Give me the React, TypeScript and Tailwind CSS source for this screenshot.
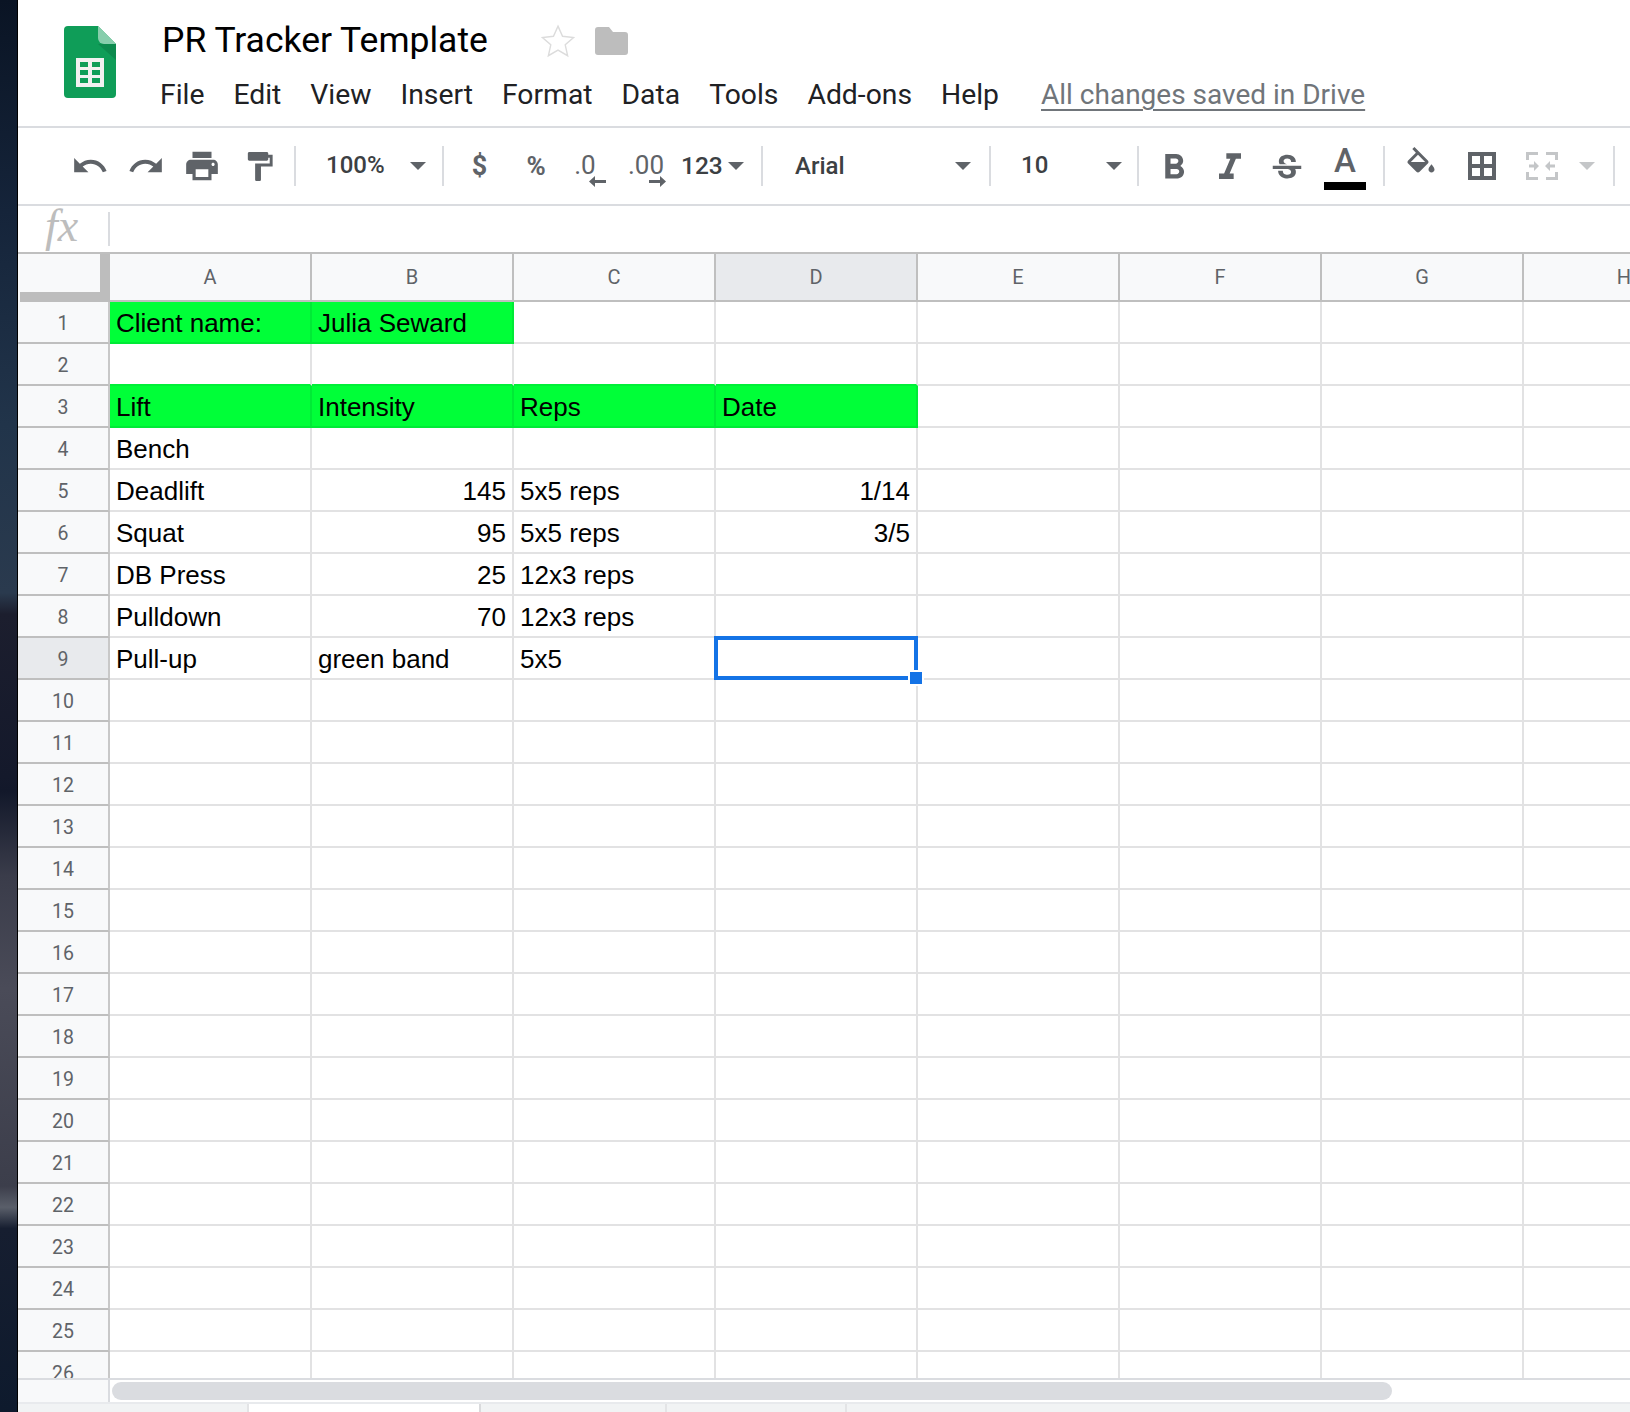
import React from "react";

const UNDO = "M12.5 8c-2.65 0-5.05.99-6.9 2.6L2 7v9h9l-3.62-3.62c1.39-1.16 3.16-1.88 5.12-1.88 3.54 0 6.55 2.31 7.6 5.5l2.37-.78C21.08 11.03 17.15 8 12.5 8z";
const REDO = "M18.4 10.6C16.55 8.99 14.15 8 11.5 8c-4.65 0-8.58 3.03-9.96 7.22L3.9 16c1.05-3.19 4.05-5.5 7.6-5.5 1.95 0 3.73.72 5.12 1.88L13 16h9V7l-3.6 3.6z";
const PRINT = "M19 8H5c-1.66 0-3 1.34-3 3v6h4v4h12v-4h4v-6c0-1.66-1.34-3-3-3zm-3 11H8v-5h8v5zm3-7c-.55 0-1-.45-1-1s.45-1 1-1 1 .45 1 1-.45 1-1 1zm-1-9H6v4h12V3z";
const ROLLER = "M18 4V3c0-.55-.45-1-1-1H5c-.55 0-1 .45-1 1v4c0 .55.45 1 1 1h12c.55 0 1-.45 1-1V6h1v4H9v11c0 .55.45 1 1 1h2c.55 0 1-.45 1-1v-9h8V4h-3z";
const BOLD = "M15.6 10.79c.97-.67 1.65-1.77 1.65-2.79 0-2.26-1.75-4-4-4H7v14h7.04c2.09 0 3.71-1.7 3.71-3.79 0-1.52-.86-2.82-2.15-3.42zM10 6.5h3c.83 0 1.5.67 1.5 1.5s-.67 1.5-1.5 1.5h-3v-3zm3.5 9H10v-3h3.5c.83 0 1.5.67 1.5 1.5s-.67 1.5-1.5 1.5z";
const ITALIC = "M10 4v3h2.21l-3.42 8H6v3h8v-3h-2.21l3.42-8H18V4z";
const STRIKE = "M6.85 7.08C6.85 4.37 9.45 3 12.24 3c1.64 0 3 .49 3.9 1.28.77.65 1.46 1.73 1.46 3.24h-3.01c0-.31-.05-.59-.15-.85-.29-.86-1.2-1.28-2.25-1.28-1.86 0-2.34.92-2.34 1.7 0 .48.25.88.74 1.21.38.25.77.48 1.41.7H7.39c-.21-.34-.54-.89-.54-1.92zM21 12v-2H3v2h9.62c1.15.45 1.96.75 1.96 1.97 0 1-.81 1.67-2.28 1.67-1.54 0-2.93-.54-2.93-2.51H6.4c0 .55.08 1.13.24 1.58.81 2.29 3.29 3.3 5.67 3.3 2.27 0 5.3-.89 5.3-4.05 0-.3-.01-1.16-.48-1.94H21V12z";
const FILL = "M16.56 8.94L7.62 0 6.21 1.41l2.38 2.38-5.15 5.15c-.59.59-.59 1.54 0 2.12l5.5 5.5c.29.29.68.44 1.06.44s.77-.15 1.06-.44l5.5-5.5c.59-.58.59-1.53 0-2.12zM5.21 10L10 5.21 14.79 10H5.21zM19 11.5s-2 2.17-2 3.5c0 1.1.9 2 2 2s2-.9 2-2c0-1.33-2-3.5-2-3.5z";

function Icon({ d, size = 32, box = "0 0 24 24" }: { d: string; size?: number; box?: string }) {
  return (
    <svg width={size} height={size} viewBox={box} fill="#5f6368" className="shrink-0">
      <path d={d} />
    </svg>
  );
}

function Caret({ light }: { light?: boolean }) {
  return (
    <svg width="16" height="8" viewBox="0 0 16 8" className="shrink-0">
      <path d="M0 0h16L8 8z" fill={light ? "#c4c6c8" : "#5f6368"} />
    </svg>
  );
}

function Sep() {
  return <div className="h-[40px] w-[2px] shrink-0 bg-[#dadce0]" />;
}

function Logo() {
  return (
    <svg width="52" height="72" viewBox="0 0 52 72" className="shrink-0">
      <path d="M34 0H4a4 4 0 0 0-4 4v64a4 4 0 0 0 4 4h44a4 4 0 0 0 4-4V18z" fill="#0f9d58" />
      <path d="M34 18h18v16L34 18z" fill="#0c8a4d" />
      <path d="M34 0l18 18H40a6 6 0 0 1-6-6z" fill="#87ceac" />
      <rect x="12" y="32" width="28" height="29" fill="#f1f1f1" />
      <g fill="#0f9d58">
        <rect x="16" y="36" width="8" height="5" />
        <rect x="28" y="36" width="8" height="5" />
        <rect x="16" y="44" width="8" height="5" />
        <rect x="28" y="44" width="8" height="5" />
        <rect x="16" y="52" width="8" height="5" />
        <rect x="28" y="52" width="8" height="5" />
      </g>
    </svg>
  );
}

function Header() {
  const menu = ["File", "Edit", "View", "Insert", "Format", "Data", "Tools", "Add-ons", "Help"];
  return (
    <div className="flex h-[128px] shrink-0 border-b-2 border-[#dadce0] pl-[46px] font-['Roboto',sans-serif]">
      <div className="pt-[26px]">
        <Logo />
      </div>
      <div className="ml-[46px] flex flex-col">
        <div className="flex h-[80px] items-center">
          <span className="text-[35.5px] leading-[48px] text-black">PR Tracker Template</span>
          <svg width="34" height="34" viewBox="0 0 24 24" className="ml-[53px] mt-[2px]" fill="none" stroke="#dcdcdc" strokeWidth="1">
            <path d="M12 1.5l3.2 7.2 7.8.8-5.9 5.2 1.7 7.7L12 18.4l-6.8 4 1.7-7.7L1 9.5l7.8-.8z" />
          </svg>
          <svg width="33" height="28" viewBox="0 0 33 28" className="ml-[20px] mt-[2px]">
            <path d="M3 0h11l4 5h12a3 3 0 0 1 3 3v17a3 3 0 0 1-3 3H3a3 3 0 0 1-3-3V3a3 3 0 0 1 3-3z" fill="#bdbdbd" />
          </svg>
        </div>
        <div className="-ml-[2px] mt-[-5px] flex items-center gap-[29px] whitespace-nowrap text-[28.3px] leading-[40px] text-[#202124]">
          {menu.map((m) => (
            <span key={m}>{m}</span>
          ))}
          <span className="ml-[13px] text-[28px] text-[#70757a] underline underline-offset-[5px]">All changes saved in Drive</span>
        </div>
      </div>
    </div>
  );
}

function Tool({ w, children, className = "" }: { w: string; children: React.ReactNode; className?: string }) {
  return <div className={`relative flex h-full shrink-0 items-center justify-center ${w} ${className}`}>{children}</div>;
}

function Toolbar() {
  const txt = "text-[24px] font-medium leading-[30px] text-[#3c4043]";
  return (
    <div className="flex h-[78px] shrink-0 items-center border-b-2 border-[#dadce0] pl-[44px] font-['Roboto',sans-serif]">
      <Tool w="w-[56px]"><Icon d={UNDO} size={38} /></Tool>
      <Tool w="w-[56px]"><Icon d={REDO} size={38} /></Tool>
      <Tool w="w-[56px]"><Icon d={PRINT} size={38} /></Tool>
      <Tool w="w-[58px]"><Icon d={ROLLER} size={35} /></Tool>
      <div className="w-[6px] shrink-0" />
      <Sep />
      <Tool w="w-[146px]" className="justify-start pl-[30px]">
        <span className={`${txt} mb-[2px] w-[84px]`}>100%</span>
        <Caret />
      </Tool>
      <Sep />
      <Tool w="w-[71px]"><span className="text-[27px] font-bold leading-[30px] text-[#5f6368]">$</span></Tool>
      <Tool w="w-[42px]"><span className="text-[26px] font-bold leading-[30px] text-[#5f6368]">%</span></Tool>
      <Tool w="w-[56px]">
        <span className="mb-[2px] text-[26px] leading-[30px] text-[#5f6368]">.0</span>
        <svg width="17" height="11" viewBox="0 0 17 11" className="absolute left-[32px] top-[48px]">
          <path d="M0 5.5L6 0v4h11v3H6v4z" fill="#5f6368" />
        </svg>
      </Tool>
      <Tool w="w-[66px]">
        <span className="mb-[2px] text-[26px] leading-[30px] text-[#5f6368]">.00</span>
        <svg width="17" height="11" viewBox="0 0 17 11" className="absolute left-[36px] top-[48px]">
          <path d="M17 5.5L11 0v4H0v3h11v4z" fill="#5f6368" />
        </svg>
      </Tool>
      <Tool w="w-[82px]" className="justify-start pl-[2px]">
        <span className="text-[24.5px] font-medium leading-[30px] text-[#3c4043]">123</span>
        <div className="ml-[5px]"><Caret /></div>
      </Tool>
      <Sep />
      <Tool w="w-[226px]" className="justify-start pl-[32px]">
        <span className={`${txt} w-[160px]`}>Arial</span>
        <Caret />
      </Tool>
      <Sep />
      <Tool w="w-[146px]" className="justify-start pl-[30px]">
        <span className={`${txt} mb-[2px] w-[85px]`}>10</span>
        <Caret />
      </Tool>
      <Sep />
      <Tool w="w-[70px]"><div className="mt-[4px]"><Icon d={BOLD} size={42} /></div></Tool>
      <Tool w="w-[42px]"><div className="mt-[4px]"><Icon d={ITALIC} size={44} /></div></Tool>
      <Tool w="w-[71px]"><div className="mt-[5px]"><Icon d={STRIKE} size={38} /></div></Tool>
      <Tool w="w-[46px]" className="flex-col">
        <span className="mb-[5px] mt-[3px] text-[33px] font-medium leading-[32px] text-[#5f6368]">A</span>
        <div className="h-[8px] w-[42px] bg-black" />
      </Tool>
      <div className="w-[15px] shrink-0" />
      <Sep />
      <Tool w="w-[72px]" className="pb-[8px]">
        <svg width="36" height="32" viewBox="0 0 24 20" fill="#5f6368" className="shrink-0">
          <path d={FILL} />
          <path d="M4 10h12l-6 6z" />
        </svg>
      </Tool>
      <Tool w="w-[49px]">
        <svg width="28" height="28" viewBox="0 0 28 28" fill="#5f6368" className="shrink-0">
          <path d="M0 0h28v28H0zM4 4v8h8V4zm12 0v8h8V4zM4 16v8h8v-8zm12 0v8h8v-8z" fillRule="evenodd" />
        </svg>
      </Tool>
      <Tool w="w-[107px]" className="justify-start pl-[20px]">
        <svg width="32" height="28" viewBox="0 0 32 28" fill="#c4c6c8" className="shrink-0">
          <path d="M0 0h12v3H3v5H0zM20 0h12v8h-3V3h-9zM0 20h3v5h9v3H0zM29 20h3v8H20v-3h9zM3 12.5h5V9l5 5-5 5v-3.5H3zM29 12.5h-5V9l-5 5 5 5v-3.5h5z" />
        </svg>
        <div className="ml-[21px]"><Caret light /></div>
      </Tool>
      <Sep />
    </div>
  );
}

function FormulaBar() {
  return (
    <div className="flex h-[46px] shrink-0 items-center">
      <div className="flex w-[90px] justify-center">
        <span className="mt-[-6px] pr-[3px] font-['Liberation_Serif',serif] text-[46px] italic leading-[40px] text-[#bdbdbd]">fx</span>
      </div>
      <div className="h-[34px] w-[2px] bg-[#dadce0]" />
    </div>
  );
}

type Row = (string | null)[];
const rows: Record<number, { v: Row; green?: boolean }> = {
  1: { v: ["Client name:", "Julia Seward", null, null], green: true },
  3: { v: ["Lift", "Intensity", "Reps", "Date"], green: true },
  4: { v: ["Bench", null, null, null] },
  5: { v: ["Deadlift", "145", "5x5 reps", "1/14"] },
  6: { v: ["Squat", "95", "5x5 reps", "3/5"] },
  7: { v: ["DB Press", "25", "12x3 reps", null] },
  8: { v: ["Pulldown", "70", "12x3 reps", null] },
  9: { v: ["Pull-up", "green band", "5x5", null] },
};

function Cell({ text, green, selected, aboveGreen }: { text: string | null; green: boolean; selected: boolean; aboveGreen: boolean }) {
  const numeric = !!text && /^[0-9/]+$/.test(text);
  return (
    <div
      className={`relative flex items-center overflow-visible border-r-2 border-b-2 pl-[6px] pr-[6px] pt-[1px] text-[26px] leading-none text-black ${
        green ? "border-[#00ea36] bg-[#00ff38]" : "border-[#e2e2e3] bg-white"
      } ${aboveGreen ? "border-b-[#00f038]" : ""} ${numeric ? "justify-end" : "justify-start"} ${selected ? "z-10" : ""}`}
    >
      {text}
      {selected && (
        <>
          <div className="absolute -left-[2px] -top-[2px] h-[44px] w-[204px] border-4 border-[#1473e6]" />
          <div className="absolute -bottom-[8px] -right-[8px] box-content h-[12px] w-[12px] border-2 border-white bg-[#1473e6]" />
        </>
      )}
    </div>
  );
}

function Grid() {
  const cols = ["A", "B", "C", "D", "E", "F", "G", "H"];
  const nums = Array.from({ length: 26 }, (_, i) => i + 1);
  return (
    <div className="h-[1126px] shrink-0 overflow-hidden border-t-2 border-[#bfbfbf] font-['Liberation_Sans',sans-serif]">
      <div className="grid w-[1708px] grid-cols-[92px_repeat(8,202px)] auto-rows-[42px] [grid-template-rows:48px]">
        <div className="relative border-b-[10px] border-r-[10px] border-[#bdbdbd] bg-[#f8f9fa]">
          <div className="absolute -bottom-[10px] left-0 h-[10px] w-[2px] bg-[#f8f9fa]" />
        </div>
        {cols.map((c) => (
          <div
            key={c}
            className={`flex items-center justify-center border-b-2 border-r-2 border-[#bfbfbf] font-['Roboto',sans-serif] text-[20px] text-[#5f6368] ${
              c === "D" ? "bg-[#e8eaed]" : "bg-[#f8f9fa]"
            }`}
          >
            {c}
          </div>
        ))}
        {nums.map((n) => (
          <React.Fragment key={n}>
            <div
              className={`flex items-center justify-center border-b-2 border-r-2 border-b-[#bfbfbf] border-r-[#c8c8c8] pt-[3px] font-['Roboto',sans-serif] text-[19.5px] text-[#5f6368] ${
                n === 9 ? "bg-[#e8eaed]" : "bg-[#f8f9fa]"
              }`}
            >
              {n}
            </div>
            {cols.map((c, i) => (
              <Cell
                key={c}
                text={rows[n]?.v[i] ?? null}
                green={!!rows[n]?.green && (n === 3 ? i < 4 : i < 2)}
                selected={n === 9 && c === "D"}
                aboveGreen={n === 2 && i < 4}
              />
            ))}
          </React.Fragment>
        ))}
      </div>
    </div>
  );
}

function ScrollBar() {
  return (
    <div className="flex h-[24px] shrink-0 border-t-2 border-[#dadce0] bg-white">
      <div className="w-[92px] shrink-0 border-r-2 border-[#dadce0] bg-[#f8f9fa]" />
      <div className="pl-[2px] pt-[2px]">
        <div className="h-[18px] w-[1280px] rounded-[9px] bg-[#dadce0]" />
      </div>
    </div>
  );
}

function Tabs() {
  return (
    <div className="flex h-[10px] shrink-0 border-t-2 border-[#e8eaed] bg-[#f1f3f4]">
      <div className="w-[231px] border-r-2 border-[#e3e4e6]" />
      <div className="w-[232px] border-r-2 border-[#d9dadc] bg-white" />
      <div className="w-[186px] border-r-2 border-[#e3e4e6]" />
      <div className="w-[180px] border-r-2 border-[#e3e4e6]" />
    </div>
  );
}

export default function App() {
  return (
    <div className="flex h-[1412px] w-[1630px] overflow-hidden bg-white">
      <div className="h-full w-[18px] shrink-0 border-r border-black bg-[linear-gradient(180deg,#0a1424_0%,#15243a_15%,#21344a_30%,#2a3a4e_42%,#1c1e2e_43.5%,#14192b_55%,#12182a_56%,#3a3c4a_62%,#4a4b58_70%,#3c3e4b_84%,#5a5f6a_85.5%,#161e30_87%,#0e1a2d_100%)]" />
      <div className="flex min-w-0 flex-1 flex-col overflow-hidden">
        <Header />
        <Toolbar />
        <FormulaBar />
        <Grid />
        <ScrollBar />
        <Tabs />
      </div>
    </div>
  );
}
